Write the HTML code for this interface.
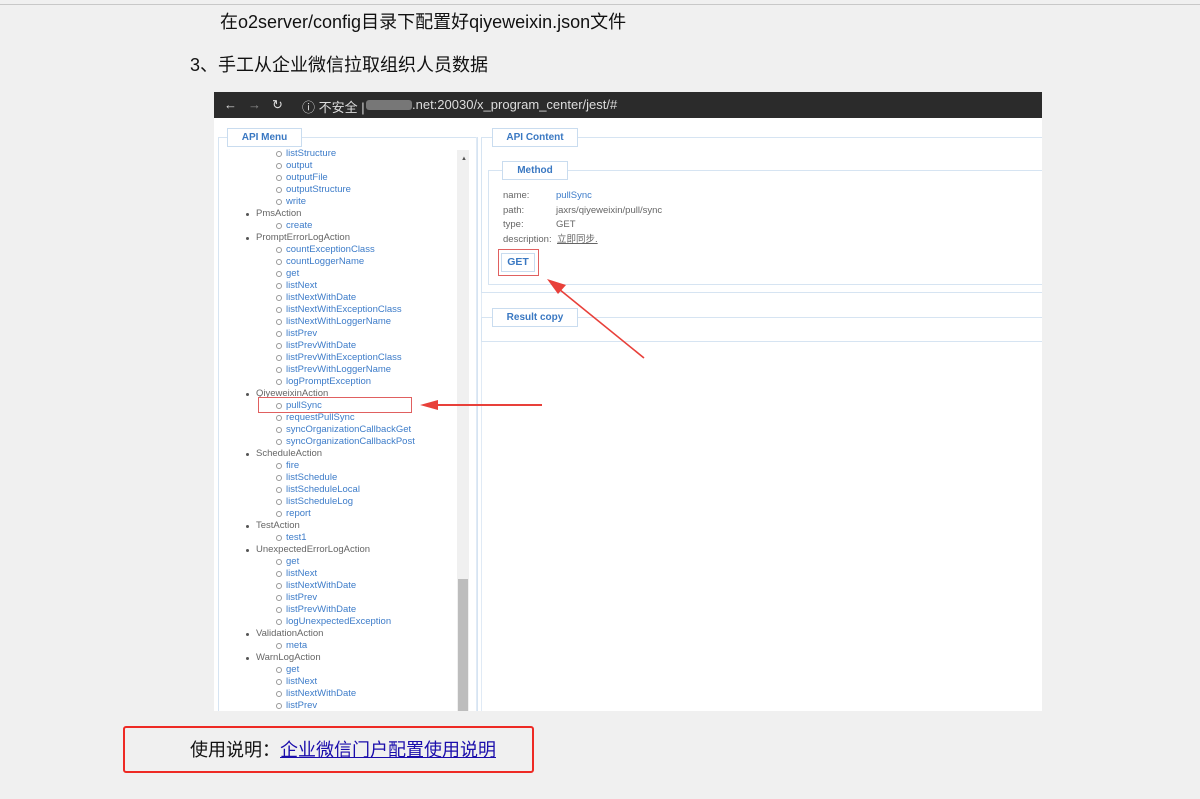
<!DOCTYPE html>
<html><head><meta charset="utf-8">
<style>
*{margin:0;padding:0;box-sizing:border-box}
body{width:1200px;height:799px;background:#f0f0f0;position:relative;overflow:hidden;font-family:"Liberation Sans","Noto Sans CJK SC",sans-serif}
.topline{position:absolute;left:0;top:4px;width:1200px;height:1px;background:#c8c8c8}
.t{position:absolute;font-size:18px;color:#111;white-space:nowrap}
.shot{position:absolute;left:214px;top:92px;width:828px;height:619px;background:#fff;overflow:hidden}
.bar{position:absolute;left:0;top:0;width:828px;height:26px;background:#2b2b2b;color:#ddd;font-size:13px}
.bar span{position:absolute;top:5px;white-space:nowrap}
.fs{position:absolute;border:1px solid #d6e4f2}
.lg{position:absolute;background:#fff;border:1px solid #c9dcef;color:#3a78c2;font-weight:bold;font-size:10px;text-align:center;line-height:17px}
.menu{position:absolute;left:0;top:56px;font-size:9.5px;line-height:12px}
.menu div{height:12px;white-space:nowrap;position:relative}
.l1{padding-left:42px;color:#666}
.l1:before{content:"";position:absolute;left:32px;top:5px;width:3px;height:3px;border-radius:50%;background:#555}
.l2{padding-left:72px;color:#3d7cc9}
.l2:before{content:"";position:absolute;left:62px;top:3px;width:4px;height:4px;border-radius:50%;border:1px solid #999}
.info{position:absolute;font-size:9.5px;color:#666;line-height:14.5px}
</style></head><body>
<div class="topline"></div>
<div class="t" style="left:220px;top:8px">在o2server/config目录下配置好qiyeweixin.json文件</div>
<div class="t" style="left:190px;top:51px">3、手工从企业微信拉取组织人员数据</div>

<div class="shot">
 <div class="bar">
  <span style="left:10px">←</span><span style="left:34px;color:#888">→</span><span style="left:58px">↻</span>
  <span style="left:88px">ⓘ 不安全 |</span>
  <span style="left:152px;top:8px;width:46px;height:10px;background:#777;border-radius:3px"></span>
  <span style="left:198px">.net:20030/x_program_center/jest/#</span>
 </div>
 <div class="fs" style="left:4px;top:45px;width:260px;height:600px"></div>
 <div class="lg" style="left:13px;top:36px;width:75px;height:19px">API Menu</div>
 <div style="position:absolute;left:243px;top:58px;width:12px;height:561px;background:#f0f0f0"></div>
 <div style="position:absolute;left:244px;top:487px;width:10px;height:132px;background:#bdbdbd"></div>
 <div style="position:absolute;left:247px;top:64px;font-size:6px;color:#555">▲</div>
 <div class="menu">
  <div class="l2">listStructure</div><div class="l2">output</div><div class="l2">outputFile</div><div class="l2">outputStructure</div><div class="l2">write</div>
  <div class="l1">PmsAction</div><div class="l2">create</div>
  <div class="l1">PromptErrorLogAction</div><div class="l2">countExceptionClass</div><div class="l2">countLoggerName</div><div class="l2">get</div><div class="l2">listNext</div><div class="l2">listNextWithDate</div><div class="l2">listNextWithExceptionClass</div><div class="l2">listNextWithLoggerName</div><div class="l2">listPrev</div><div class="l2">listPrevWithDate</div><div class="l2">listPrevWithExceptionClass</div><div class="l2">listPrevWithLoggerName</div><div class="l2">logPromptException</div>
  <div class="l1">QiyeweixinAction</div><div class="l2">pullSync</div><div class="l2">requestPullSync</div><div class="l2">syncOrganizationCallbackGet</div><div class="l2">syncOrganizationCallbackPost</div>
  <div class="l1">ScheduleAction</div><div class="l2">fire</div><div class="l2">listSchedule</div><div class="l2">listScheduleLocal</div><div class="l2">listScheduleLog</div><div class="l2">report</div>
  <div class="l1">TestAction</div><div class="l2">test1</div>
  <div class="l1">UnexpectedErrorLogAction</div><div class="l2">get</div><div class="l2">listNext</div><div class="l2">listNextWithDate</div><div class="l2">listPrev</div><div class="l2">listPrevWithDate</div><div class="l2">logUnexpectedException</div>
  <div class="l1">ValidationAction</div><div class="l2">meta</div>
  <div class="l1">WarnLogAction</div><div class="l2">get</div><div class="l2">listNext</div><div class="l2">listNextWithDate</div><div class="l2">listPrev</div>
 </div>
 <div style="position:absolute;left:262px;top:45px;width:1px;height:574px;background:#e0eaf5"></div>
 <div style="position:absolute;left:267px;top:45px;width:1px;height:574px;background:#e0eaf5"></div>
 <div class="fs" style="left:267px;top:45px;width:600px;height:156px"></div>
 <div class="lg" style="left:278px;top:36px;width:86px;height:19px">API Content</div>
 <div class="fs" style="left:274px;top:78px;width:600px;height:115px"></div>
 <div class="lg" style="left:288px;top:69px;width:66px;height:19px">Method</div>
 <div class="info" style="left:289px;top:97px">name:<br>path:<br>type:<br>description:</div>
 <div class="info" style="left:342px;top:97px"><span style="color:#3d7cc9">pullSync</span><br>jaxrs/qiyeweixin/pull/sync<br>GET</div>
 <div class="info" style="left:343px;top:141px;text-decoration:underline">立即同步.</div>
 <div class="lg" style="left:287px;top:161px;width:34px;height:19px;font-size:10.5px">GET</div>
 <div style="position:absolute;left:284px;top:157px;width:41px;height:27px;border:1px solid #e06060"></div>
 <div class="fs" style="left:267px;top:225px;width:600px;height:25px"></div>
 <div class="lg" style="left:278px;top:216px;width:86px;height:19px">Result copy</div>
 <div style="position:absolute;left:44px;top:305px;width:154px;height:16px;border:1px solid #e06060"></div>
 <svg style="position:absolute;left:0;top:0" width="828" height="619">
  <line x1="430" y1="266" x2="340" y2="193" stroke="#e8403a" stroke-width="1.6"/>
  <polygon points="333,187 352,193 344,202" fill="#e8403a"/>
  <line x1="328" y1="313" x2="220" y2="313" stroke="#e8403a" stroke-width="2"/>
  <polygon points="206,313 224,308 224,318" fill="#e8403a"/>
 </svg>
</div>

<div style="position:absolute;left:123px;top:726px;width:411px;height:47px;border:2px solid #ee2a24;border-radius:3px"></div>
<div class="t" style="left:190px;top:736px">使用说明：<span style="color:#1a0dab;text-decoration:underline">企业微信门户配置使用说明</span></div>
</body></html>
